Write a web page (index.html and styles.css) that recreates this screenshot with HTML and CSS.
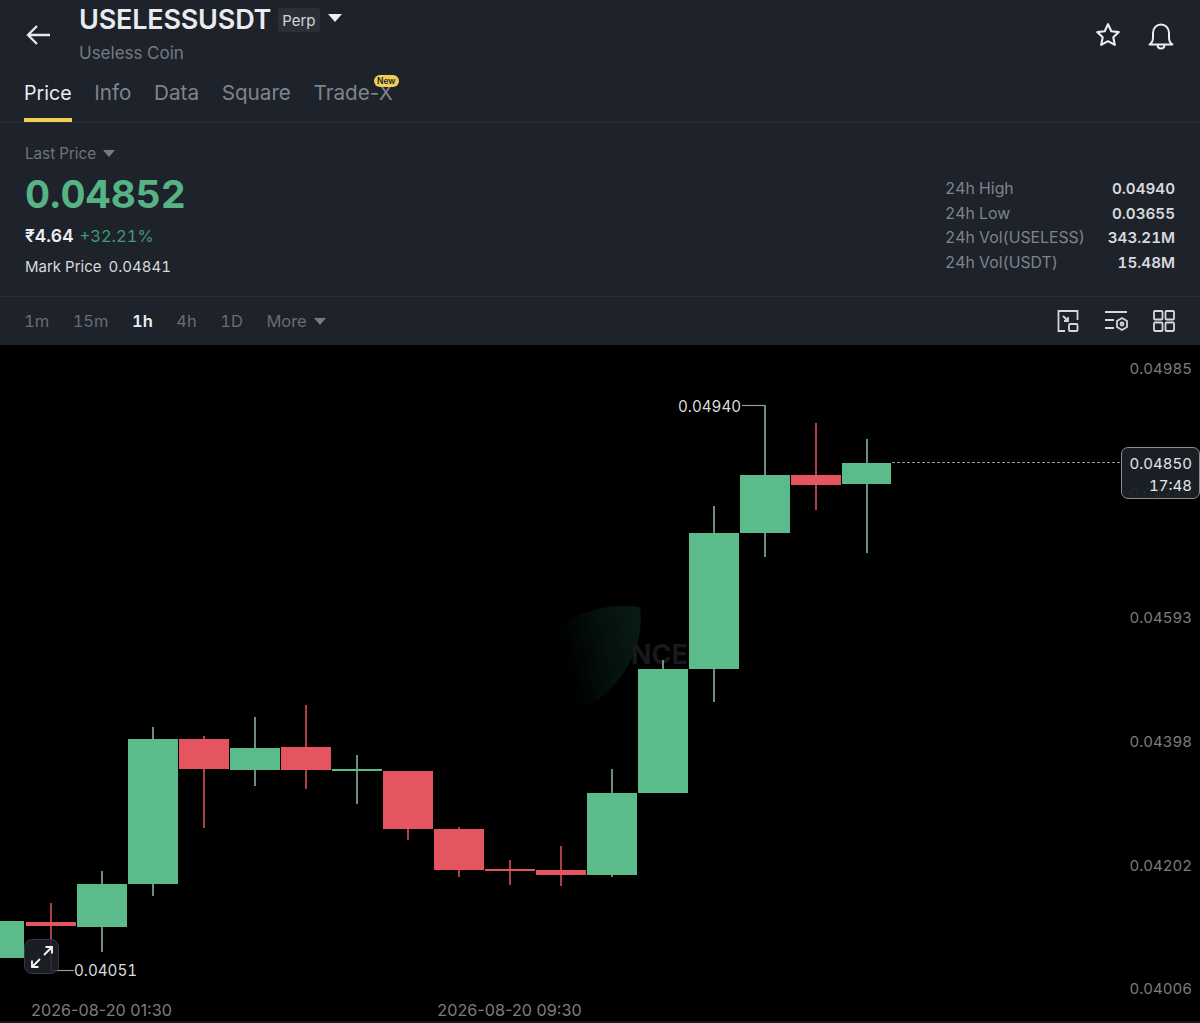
FILE: index.html
```html
<!DOCTYPE html>
<html lang="en">
<head>
<meta charset="utf-8">
<title>USELESSUSDT Perp</title>
<link rel="stylesheet" href="styles.css">
</head>
<body>
<div class="page">
  <header class="panel">
    <div class="topbar">
      <svg class="back" width="28" height="24" viewBox="0 0 28 24"><path d="M25 12H3M12 3l-9 9 9 9" fill="none" stroke="#e8eaed" stroke-width="2.3"/></svg>
      <div class="title-block">
        <div class="title-row">
          <span class="symbol">USELESSUSDT</span>
          <span class="perp">Perp</span>
          <span class="caret caret-white"></span>
        </div>
        <div class="coin">Useless Coin</div>
      </div>
      <div class="top-icons">
        <svg width="28" height="28" viewBox="0 0 28 28"><path d="M14 3.200l3.300 7 7.500.9-5.500 5.200 1.500 7.600-6.800-3.800-6.800 3.800 1.500-7.600-5.500-5.200 7.500-.9z" fill="none" stroke="#eceef1" stroke-width="2.100" stroke-linejoin="round"/></svg>
        <svg width="28" height="30" viewBox="0 0 28 30"><path d="M2.500 23.500c2.500-1.500 3.500-3.500 3.500-7v-4.500c0-5 3.500-8.500 8-8.500s8 3.500 8 8.500v4.500c0 3.500 1 5.500 3.500 7zM10.500 23.500c0 2.500 1.500 4 3.500 4s3.500-1.500 3.500-4" fill="none" stroke="#eceef1" stroke-width="2" stroke-linejoin="round"/></svg>
      </div>
    </div>
    <nav class="tabs">
      <span class="tab tab-active">Price</span>
      <span class="tab">Info</span>
      <span class="tab">Data</span>
      <span class="tab">Square</span>
      <span class="tab tab-new">Trade-X<span class="badge">New</span></span>
    </nav>
    <section class="stats">
      <div class="stats-left">
        <div class="last-label">Last Price <span class="caret caret-grey"></span></div>
        <div class="last-price">0.04852</div>
        <div class="change"><span class="inr">₹4.64</span><span class="pct">+32.21%</span></div>
        <div class="mark"><span>Mark Price</span><span>0.04841</span></div>
      </div>
      <dl class="stats-right">
        <div class="stat-row"><dt>24h High</dt><dd>0.04940</dd></div>
        <div class="stat-row"><dt>24h Low</dt><dd>0.03655</dd></div>
        <div class="stat-row"><dt>24h Vol(USELESS)</dt><dd>343.21M</dd></div>
        <div class="stat-row"><dt>24h Vol(USDT)</dt><dd>15.48M</dd></div>
      </dl>
    </section>
    <div class="timeframes">
      <span class="tf">1m</span>
      <span class="tf">15m</span>
      <span class="tf tf-active">1h</span>
      <span class="tf">4h</span>
      <span class="tf">1D</span>
      <span class="tf">More <span class="caret caret-grey"></span></span>
      <div class="tf-icons">
        <svg width="24" height="24" viewBox="0 0 24 24" fill="none" stroke="#d5d7da" stroke-width="1.800"><path d="M9 22H2.500V2h19v9"/><path d="M7 7l5 5M12 8v4H8"/><rect x="13" y="15" width="8.500" height="7" rx="1"/></svg>
        <svg width="24" height="24" viewBox="0 0 24 24" fill="none" stroke="#d5d7da" stroke-width="1.800"><path d="M1 3h22M1 11h9M1 19h9"/><path d="M18 9l5 3v6l-5 3-5-3v-6z"/><circle cx="18" cy="15" r="1.500"/></svg>
        <svg width="24" height="24" viewBox="0 0 24 24" fill="none" stroke="#d5d7da" stroke-width="1.800"><rect x="2" y="2" width="8.500" height="8.500" rx="1"/><rect x="13.500" y="2" width="8.500" height="8.500" rx="1"/><rect x="2" y="13.500" width="8.500" height="8.500" rx="1"/><rect x="13.500" y="13.500" width="8.500" height="8.500" rx="1"/></svg>
      </div>
    </div>
  </header>
  <main class="chart">
    <svg class="chart-svg" width="1200" height="678" viewBox="0 345 1200 678">
      <defs>
        <linearGradient id="glow" x1="1" y1="0.35" x2="0.1" y2="0.55">
          <stop offset="0" stop-color="#081a14"/>
          <stop offset="0.4" stop-color="#04100c"/>
          <stop offset="0.85" stop-color="#000"/>
        </linearGradient>
      </defs>
      <path d="M640 607c6 40-20 82-52 99-24-4-48-30-46-56 4-24 52-50 98-43z" fill="url(#glow)"/>
      <text class="watermark" x="631" y="664">NCE</text>

      <g class="wicks-green">
        <path d="M102 871V952M153 727V896M255 717V786M357 755V804M612 769V877M663 660V669M714 506V702M765 405V557M867 439V553"/>
      </g>
      <g class="wicks-red">
        <path d="M51 903V970M204 736V828M306 705V789M408 771V840M459 827V877M510 860V885M561 846V886M816 423V510"/>
      </g>
      <g class="up">
        <rect x="-25" y="921" width="49" height="37"/>
        <rect x="77" y="884" width="50" height="43"/>
        <rect x="128" y="739" width="50" height="145"/>
        <rect x="230" y="748" width="50" height="22"/>
        <rect x="332" y="769" width="50" height="2"/>
        <rect x="587" y="793" width="50" height="82"/>
        <rect x="638" y="669" width="50" height="124"/>
        <rect x="689" y="533" width="50" height="136"/>
        <rect x="740" y="475" width="50" height="58"/>
        <rect x="842" y="463" width="49" height="21"/>
      </g>
      <g class="down">
        <rect x="26" y="922" width="50" height="4"/>
        <rect x="179" y="739" width="50" height="30"/>
        <rect x="281" y="747" width="50" height="23"/>
        <rect x="383" y="771" width="50" height="58"/>
        <rect x="434" y="829" width="50" height="41"/>
        <rect x="485" y="869" width="50" height="2"/>
        <rect x="536" y="870" width="50" height="5"/>
        <rect x="791" y="475" width="50" height="10"/>
      </g>

      <path class="leader" d="M742 405.500H765"/>
      <path class="leader" d="M51 970.500H74"/>
      <path class="price-line" d="M892 462.500H1122"/>
      <text class="extreme" x="678" y="411.500">0.04940</text>
      <text class="extreme" x="74" y="976">0.04051</text>

      <g class="axis-y">
        <text x="1192" y="374">0.04985</text>
        <text class="axis-dim" x="1192" y="499">0.04789</text>
        <text x="1192" y="623">0.04593</text>
        <text x="1192" y="747">0.04398</text>
        <text x="1192" y="871">0.04202</text>
        <text x="1192" y="994">0.04006</text>
      </g>
      <g class="axis-x">
        <text x="101.500" y="1016">2026-08-20 01:30</text>
        <text x="509.500" y="1016">2026-08-20 09:30</text>
      </g>
    </svg>
    <div class="price-tag"><span>0.04850</span><span>17:48</span></div>
    <div class="expand">
      <svg width="24" height="24" viewBox="0 0 24 24" fill="none" stroke="#f2f3f5" stroke-width="1.900"><path d="M14 10l8-8M15.500 2H22v6.500M10 14l-8 8M8.500 22H2v-6.500"/></svg>
    </div>
    <div class="baseline"></div>
  </main>
</div>
</body>
</html>
```
FILE: styles.css
```css
* { box-sizing: border-box; }
html, body { margin: 0; padding: 0; background: #000; }
body { font-family: "Inter", "Liberation Sans", sans-serif; font-feature-settings: "tnum"; }
.page { width: 1200px; height: 1023px; display: flex; flex-direction: column; overflow: hidden; }

.panel { background: #1e222a; height: 345px; display: flex; flex-direction: column; flex: none; }

.topbar { height: 75px; display: flex; padding: 0 24px 0 25px; }
.back { margin-top: 23px; flex: none; }
.title-block { margin-left: 26px; padding-top: 4px; flex: 1; }
.title-row { display: flex; align-items: center; height: 32px; }
.symbol { font-size: 27px; font-weight: 600; color: #e9ebee; line-height: 32px; letter-spacing: -0.2px; }
.perp { margin-left: 7px; height: 24px; padding: 0 4px; background: #2a2f38; border-radius: 3px; font-size: 15px; line-height: 25px; color: #d3d5d9; }
.coin { margin-top: 6px; font-size: 17px; line-height: 22px; color: #767b84; }
.caret { display: inline-block; width: 0; height: 0; border-left: 6px solid transparent; border-right: 6px solid transparent; }
.caret-white { margin: -4px 0 0 8px; border-top: 8px solid #eceef1; border-left-width: 7px; border-right-width: 7px; }
.caret-grey { margin-left: 3px; vertical-align: 2px; border-top: 7px solid #767b84; }
.top-icons { display: flex; gap: 25px; padding-top: 21px; padding-right: 1px; align-items: flex-start; }

.tabs { height: 48px; display: flex; gap: 22.600px; padding-left: 24px; border-bottom: 1px solid #282c34; font-feature-settings: normal; }
.tab { position: relative; height: 47px; font-size: 20.700px; line-height: 36px; color: #7f848d; }
.tab-active { font-size: 19.600px; color: #eceef1; border-bottom: 4px solid #f0cd55; }
.badge { position: absolute; right: -6px; top: 0; height: 12px; width: 25px; border-radius: 6px; background: #f0cd55; color: #1e222a; font-size: 8.500px; font-weight: 600; line-height: 12px; text-align: center; }

.stats { height: 174px; display: flex; justify-content: space-between; padding: 21px 25px 0; border-bottom: 1px solid #282c34; }
.last-label { font-size: 15.200px; line-height: 20px; color: #6f747d; }
.last-price { margin-top: 8px; font-size: 38.800px; font-weight: 700; line-height: 44px; color: #56b386; }
.change { display: flex; gap: 6px; margin-top: 8px; line-height: 24px; align-items: baseline; }
.inr { font-size: 17.500px; font-weight: 600; color: #eceef1; }
.pct { font-size: 16.500px; color: #3f9e72; }
.mark { display: flex; gap: 7px; margin-top: 7px; font-size: 15px; line-height: 24px; color: #d8dade; }
.stats-right { margin: 33px 0 0; width: 230px; }
.stat-row { display: flex; justify-content: space-between; height: 24.600px; line-height: 24px; font-size: 15.800px; }
.stat-row dt { color: #7f848d; }
.stat-row dd { margin: 0; font-size: 15.200px; color: #d8dade; font-weight: 600; }

.timeframes { height: 48px; display: flex; align-items: center; gap: 23.500px; padding: 0 24px; font-size: 16.500px; color: #676c75; }
.tf-active { color: #eceef1; font-weight: 600; }
.tf-icons { margin-left: auto; display: flex; gap: 24px; }

.chart { position: relative; flex: 1; background: #000; }
.chart-svg { display: block; }
.up rect { fill: #5cbb8a; }
.down rect { fill: #e5555f; }
.wicks-green path { stroke: #8fbfa5; stroke-width: 1.500; fill: none; }
.wicks-red path { stroke: #e5555f; stroke-width: 1.500; fill: none; }
.leader { stroke: #9a9a9a; stroke-width: 1.200; fill: none; }
.price-line { stroke: #9a9a9a; stroke-width: 1; stroke-dasharray: 3 2; fill: none; }
.watermark { font-family: "Inter", sans-serif; font-size: 27px; font-weight: 700; fill: #17191d; }
.extreme { font-family: "Inter", sans-serif; font-size: 15.200px; fill: #dcdcdc; }
.axis-y text { font-family: "Inter", sans-serif; font-size: 15px; fill: #7d7d7d; text-anchor: end; }
.axis-y .axis-dim { fill: #555; }
.axis-x text { font-family: "Inter", sans-serif; font-size: 16.200px; fill: #7d7d7d; text-anchor: middle; font-feature-settings: normal; }

.price-tag { position: absolute; left: 1121px; top: 102px; width: 79px; height: 52px; display: flex; flex-direction: column; align-items: flex-end; justify-content: center; padding: 3px 7px 0 0; background: rgba(30, 34, 42, 0.88); border: 1px solid #8a8d92; border-radius: 7px; font-size: 15px; line-height: 22px; color: #e4e5e7; }
.expand { position: absolute; left: 24px; top: 594px; width: 35px; height: 35px; display: flex; align-items: center; justify-content: center; background: rgba(30, 34, 42, 0.85); border: 1px solid #34383f; border-radius: 8px; }
.baseline { position: absolute; left: 0; right: 0; bottom: 0; height: 2px; background: #14171b; }
```
